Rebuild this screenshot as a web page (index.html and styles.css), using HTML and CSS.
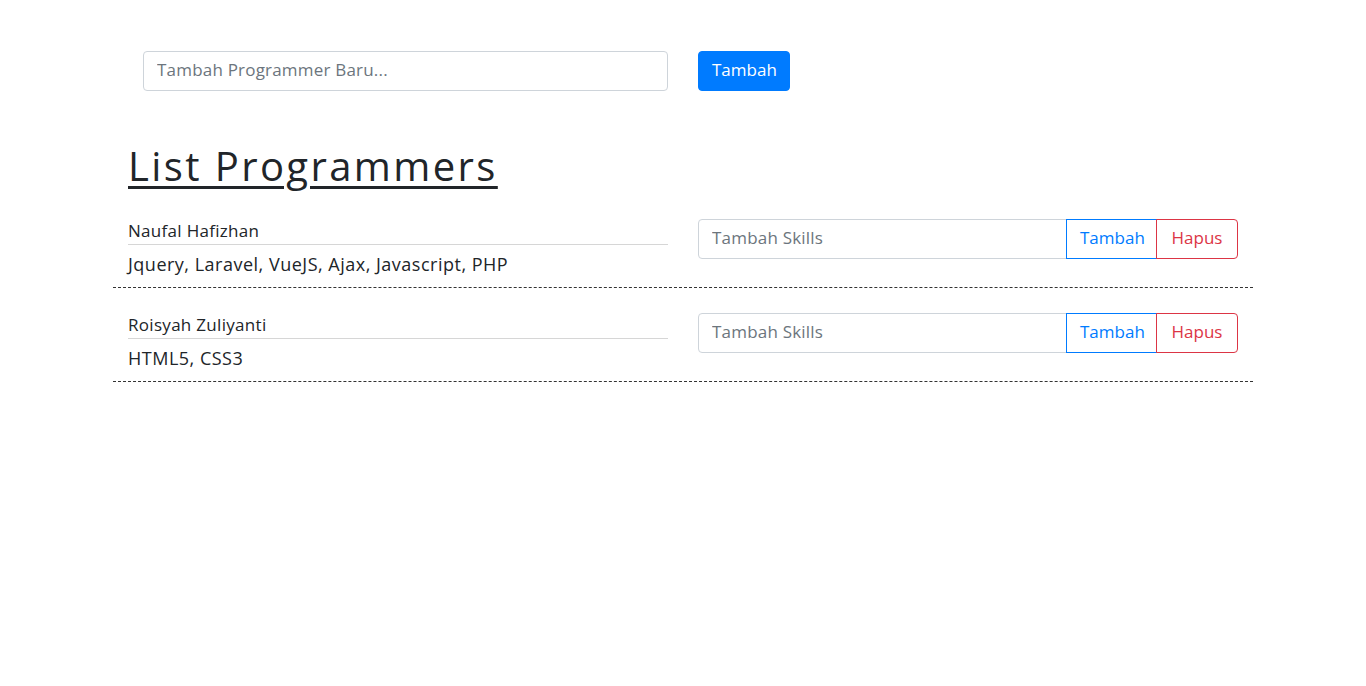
FILE: index.html
```html
<!DOCTYPE html>
<html lang="id">
<head>
<meta charset="utf-8">
<title>List Programmers</title>
<link rel="stylesheet" href="styles.css">
</head>
<body>
<div class="container">
  <form class="add-form">
    <div class="add-col">
      <input class="form-control" type="text" placeholder="Tambah Programmer Baru...">
    </div>
    <div class="add-btn-col">
      <button type="button" class="btn btn-primary">Tambah</button>
    </div>
  </form>

  <h1 class="title">List Programmers</h1>

  <div class="prog-row">
    <div class="prog-info">
      <div class="prog-name">Naufal Hafizhan</div>
      <div class="prog-skills">Jquery, Laravel, VueJS, Ajax, Javascript, PHP</div>
    </div>
    <div class="input-group">
      <input class="form-control group-input" type="text" placeholder="Tambah Skills">
      <button type="button" class="btn btn-outline-primary group-mid">Tambah</button>
      <button type="button" class="btn btn-outline-danger group-end">Hapus</button>
    </div>
  </div>

  <div class="prog-row">
    <div class="prog-info">
      <div class="prog-name">Roisyah Zuliyanti</div>
      <div class="prog-skills">HTML5, CSS3</div>
    </div>
    <div class="input-group">
      <input class="form-control group-input" type="text" placeholder="Tambah Skills">
      <button type="button" class="btn btn-outline-primary group-mid">Tambah</button>
      <button type="button" class="btn btn-outline-danger group-end">Hapus</button>
    </div>
  </div>
</div>
</body>
</html>
```

FILE: styles.css
```css
* { box-sizing: border-box; }
html, body { margin: 0; padding: 0; background: #fff; }
body {
  font-family: "Open Sans", "Noto Sans", sans-serif;
  font-size: 17px;
  color: #212529;
}
.container {
  width: 1140px;
  margin: 0 auto;
  padding: 51px 15px 0;
}
.add-form {
  display: grid;
  grid-template-columns: 540px 540px;
  column-gap: 30px;
  margin: 0;
}
.add-col { padding-left: 15px; }
.form-control {
  display: block;
  width: 100%;
  height: 40px;
  padding: 0 13px 3px;
  font-family: inherit;
  font-size: 17px;
  letter-spacing: 0.2px;
  color: #495057;
  background: #fff;
  border: 1px solid #ced4da;
  border-radius: 4px;
  outline: none;
}
.form-control::placeholder { color: #6c757d; opacity: 1; }
.btn {
  font-family: inherit;
  font-size: 17px;
  height: 40px;
  padding: 0 13px 3px;
  border: 1px solid transparent;
  border-radius: 4px;
  background: transparent;
  cursor: pointer;
}
.btn-primary { background: #007bff; border-color: #007bff; color: #fff; width: 92px; }
.btn-outline-primary { color: #007bff; border-color: #007bff; }
.btn-outline-danger { color: #dc3545; border-color: #dc3545; }
.title {
  margin: 51px 0 4px;
  font-size: 40px;
  line-height: 48px;
  font-weight: 400;
  letter-spacing: 2.4px;
  text-decoration: underline;
  text-decoration-thickness: 3px;
  text-underline-offset: 5px;
}
.prog-row {
  display: grid;
  grid-template-columns: 540px 540px;
  column-gap: 30px;
  margin: 0 -15px;
  padding: 25px 15px 10px;
  border-bottom: 1px dashed #333;
}
.prog-name {
  line-height: 23px;
  padding-bottom: 2px;
  letter-spacing: 0.3px;
  border-bottom: 1px solid #d6d6d6;
}
.prog-skills {
  font-size: 18px;
  letter-spacing: 0.5px;
  line-height: 22px;
  padding-top: 8px;
  padding-bottom: 2px;
}
.input-group {
  display: flex;
  align-items: stretch;
  height: 40px;
}
.group-input {
  flex: 1;
  border-radius: 4px 0 0 4px;
}
.group-mid {
  width: 91px;
  border-radius: 0;
  margin-left: -1px;
}
.group-end {
  width: 82px;
  border-radius: 0 4px 4px 0;
  margin-left: -1px;
}
```
